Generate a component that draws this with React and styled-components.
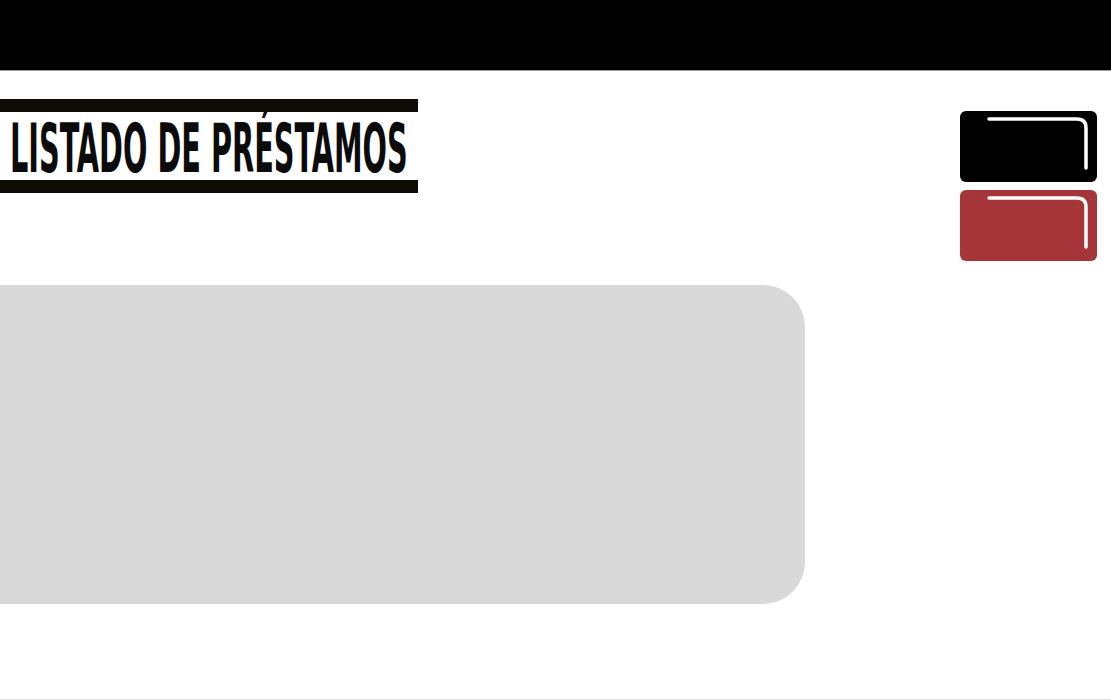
import React from 'react';
import styled, { createGlobalStyle } from 'styled-components';

const GlobalStyle = createGlobalStyle`
  body {
    margin: 0;
    background: #ffffff;
    font-family: "Liberation Sans", Arial, sans-serif;
  }
`;

const Page = styled.div`
  width: 1111px;
  height: 700px;
  display: flex;
  flex-direction: column;
  border-bottom: 1px solid #e2e2e2;
  box-sizing: border-box;
  overflow: hidden;
`;

const TopBar = styled.header`
  height: 71px;
  flex-shrink: 0;
  background: #000000;
  border-bottom: 1px solid #9a9a9a;
  box-sizing: border-box;
`;

const Body = styled.main`
  display: flex;
  justify-content: space-between;
  align-items: flex-start;
`;

const LeftColumn = styled.section`
  display: flex;
  flex-direction: column;
  padding-top: 28px;
`;

const TitleBlock = styled.div`
  width: 418px;
  border-top: 13px solid #0d0b06;
  border-bottom: 13px solid #0d0b06;
  height: 68px;
  display: flex;
  align-items: flex-start;
`;

const Title = styled.h1`
  margin: 3px 0 0 10px;
  font-family: "DejaVu Sans Condensed", "Liberation Sans", sans-serif;
  font-weight: 700;
  font-size: 68px;
  line-height: 1;
  color: #0b0b0b;
  white-space: nowrap;
  transform: scaleX(0.47);
  transform-origin: left center;
`;

const Panel = styled.div`
  margin-top: 92px;
  width: 805px;
  height: 319px;
  background: #d9d9d9;
  border-radius: 0 42px 42px 0;
`;

const Actions = styled.aside`
  display: flex;
  flex-direction: column;
  gap: 8px;
  padding-top: 40px;
  padding-right: 14px;
`;

const ActionButton = styled.button`
  width: 137px;
  height: 71px;
  padding: 0;
  border: none;
  border-radius: 6px;
  background: ${(p) => p.$color};
  cursor: pointer;
  display: block;
`;

const Shine = () => (
  <svg width="137" height="71" viewBox="0 0 137 71" style={{ display: 'block' }}>
    <path
      d="M29 8 H117 Q126 8 126 17 V57"
      fill="none"
      stroke="#ffffff"
      strokeWidth="3.5"
      strokeLinecap="round"
    />
  </svg>
);

export default function App() {
  return (
    <>
      <GlobalStyle />
      <Page>
        <TopBar />
        <Body>
          <LeftColumn>
            <TitleBlock>
              <Title>LISTADO DE PRÉSTAMOS</Title>
            </TitleBlock>
            <Panel />
          </LeftColumn>
          <Actions>
            <ActionButton $color="#000000" aria-label="Acción principal">
              <Shine />
            </ActionButton>
            <ActionButton $color="#a6353a" aria-label="Acción secundaria">
              <Shine />
            </ActionButton>
          </Actions>
        </Body>
      </Page>
    </>
  );
}
